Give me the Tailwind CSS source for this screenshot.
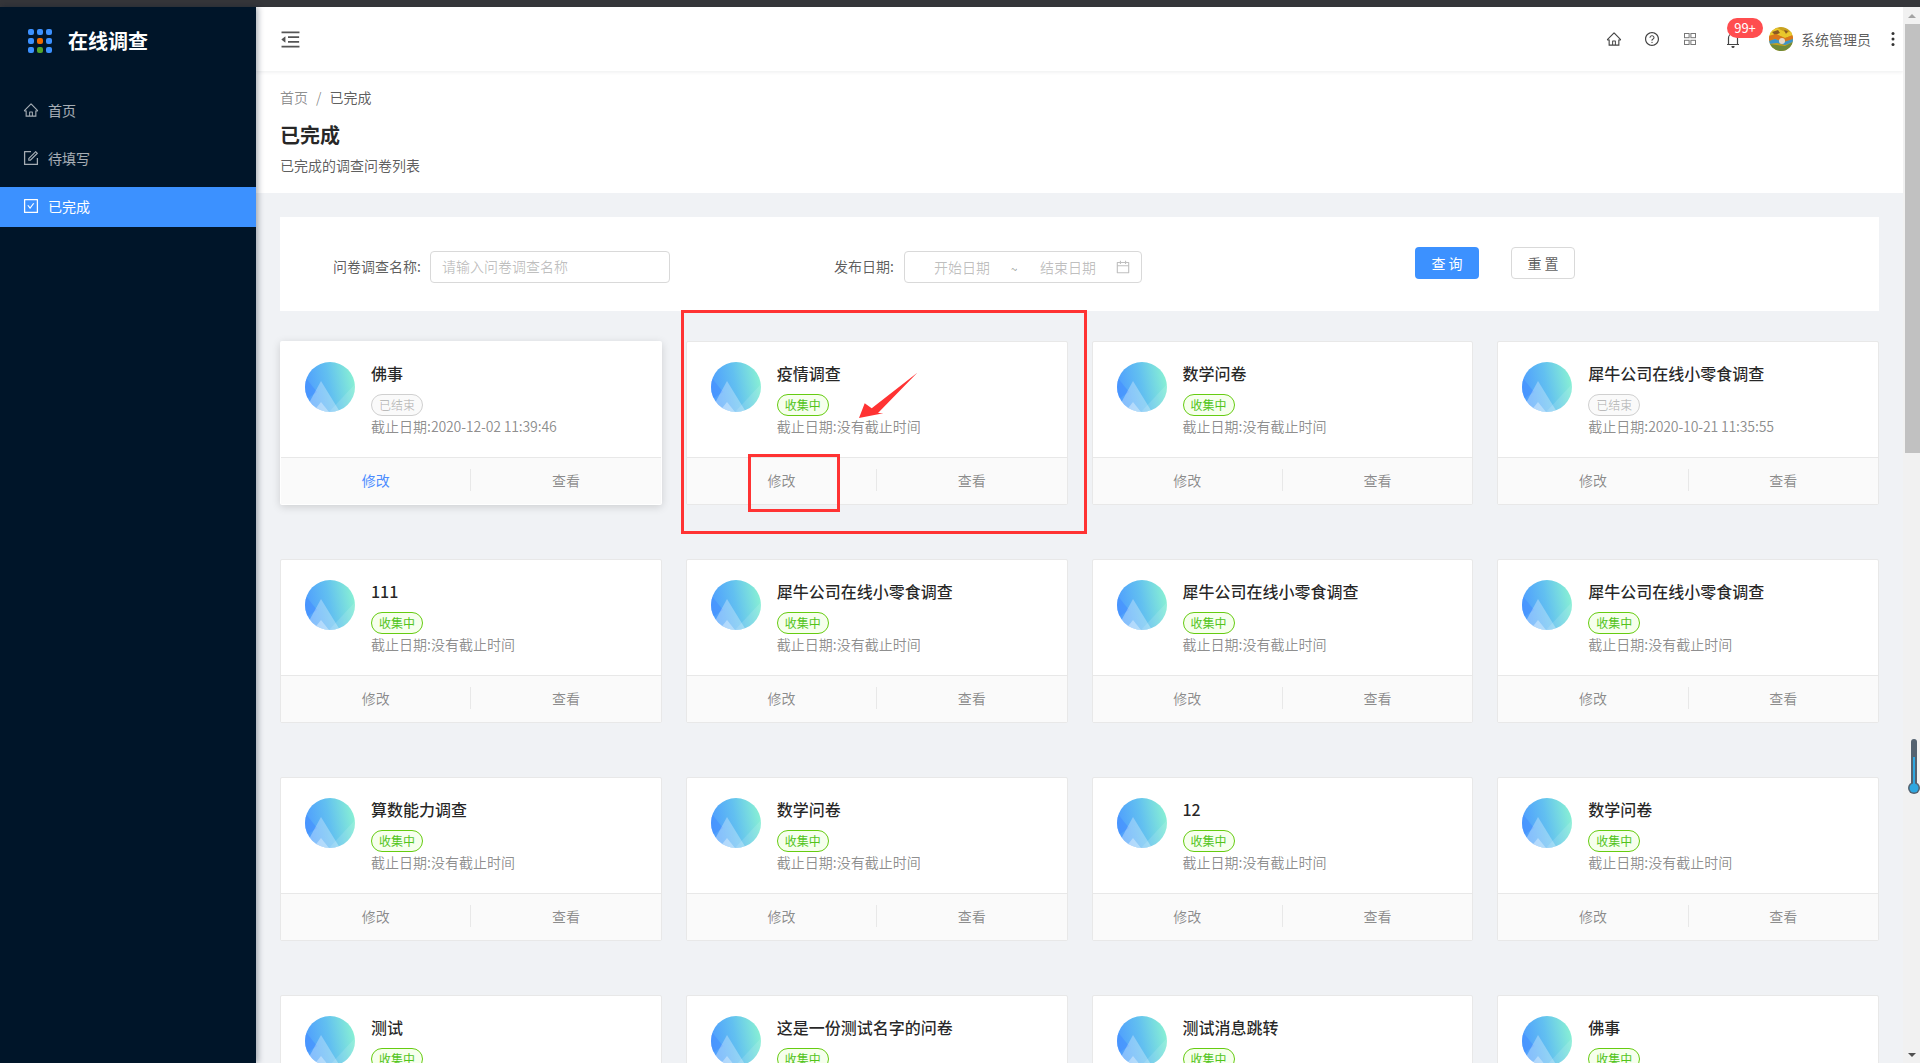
<!DOCTYPE html>
<html>

<head>
    <meta charset="utf-8">
    <script src="https://cdn.jsdelivr.net/npm/@tailwindcss/browser@4"></script>
    <title>已完成</title>
</head>

<body class="h-screen overflow-hidden bg-[#f0f2f5] font-['Noto_Sans_CJK_SC',sans-serif] text-sm">
    <div class="h-[7px] bg-[#35363a]"></div>
    <div class="flex h-[1056px]">
        <!-- sidebar -->
        <aside class="w-[256px] shrink-0 bg-[#001529] z-20 shadow-[2px_0_6px_rgba(0,21,41,0.35)]">
            <div class="flex items-center h-[68px] pl-[28px] gap-[16px]">
                <div class="grid grid-cols-3 gap-[3px]">
                    <i class="w-[6px] h-[6px] rounded-[2px] bg-[#3c91ff]"></i>
                    <i class="w-[6px] h-[6px] rounded-[2px] bg-[#3c91ff]"></i>
                    <i class="w-[6px] h-[6px] rounded-[2px] bg-[#3c91ff]"></i>
                    <i class="w-[6px] h-[6px] rounded-[2px] bg-[#3c91ff]"></i>
                    <i class="w-[6px] h-[6px] rounded-[2px] bg-[#f06a00]"></i>
                    <i class="w-[6px] h-[6px] rounded-[2px] bg-[#3c91ff]"></i>
                    <i class="w-[6px] h-[6px] rounded-[2px] bg-[#3c91ff]"></i>
                    <i class="w-[6px] h-[6px] rounded-[2px] bg-[#52a52a]"></i>
                    <i class="w-[6px] h-[6px] rounded-[2px] bg-[#3c91ff]"></i>
                </div>
                <span class="text-white text-[20px] font-bold">在线调查</span>
            </div>
            <nav class="pt-[16px] flex flex-col gap-[8px] text-white/65">
                <a class="flex items-center h-[40px] pb-[2px] pl-[23px] gap-[9px]">
                    <svg class="w-[16px] h-[16px]" viewBox="0 0 1024 1024" fill="currentColor"><path d="M946.5 505L560.1 118.8l-25.9-25.9a31.5 31.5 0 0 0-44.4 0L77.5 505a63.9 63.9 0 0 0-18.8 46c.4 35.2 29.7 63.3 64.9 63.3h42.5V940h691.8V614.3h43.4c17.1 0 33.2-6.7 45.3-18.8a63.6 63.6 0 0 0 18.7-45.3c0-17-6.7-33.1-18.8-45.2zM568 868H456V664h112v204zm217.9-325.7V868H632V640c0-22.1-17.9-40-40-40H432c-22.1 0-40 17.9-40 40v228H238.1V542.3h-96l370-369.7 23.1 23.1L882 542.3h-96.1z"/></svg>
                    首页
                </a>
                <a class="flex items-center h-[40px] pb-[2px] pl-[22px] gap-[8px]">
                    <svg class="w-[18px] h-[18px]" viewBox="0 0 1024 1024" fill="currentColor"><path d="M904 512h-56c-4.4 0-8 3.6-8 8v320H184V184h320c4.4 0 8-3.6 8-8v-56c0-4.4-3.6-8-8-8H144c-17.7 0-32 14.3-32 32v736c0 17.7 14.3 32 32 32h736c17.7 0 32-14.3 32-32V520c0-4.4-3.6-8-8-8z"/><path d="M355.9 534.9L354 653.8c-.1 8.9 7.1 16.2 16 16.2h.4l118-2.9c2-.1 4-.9 5.4-2.3l415.9-415c3.1-3.1 3.1-8.2 0-11.3L785.4 114.3c-1.6-1.6-3.6-2.3-5.7-2.3s-4.1.8-5.7 2.3l-415.8 415a8.3 8.3 0 0 0-2.3 5.6zm63.5 23.6L779.7 199l45.2 45.1-360.5 359.7-45.7 1.1.7-46.4z"/></svg>
                    待填写
                </a>
                <a class="flex items-center h-[40px] pb-[2px] pl-[22px] gap-[8px] bg-[#3c91ff] text-white">
                    <svg class="w-[18px] h-[18px]" viewBox="0 0 1024 1024" fill="currentColor"><path d="M433.1 657.7a31.8 31.8 0 0 0 51.7 0l210.6-292c3.8-5.3 0-12.7-6.5-12.7H642c-10.2 0-19.9 4.9-25.9 13.3L459 584.3l-71.2-98.8c-6-8.3-15.6-13.3-25.9-13.3H315c-6.5 0-10.3 7.4-6.5 12.7l124.6 172.8z"/><path d="M880 112H144c-17.7 0-32 14.3-32 32v736c0 17.7 14.3 32 32 32h736c17.7 0 32-14.3 32-32V144c0-17.7-14.3-32-32-32zm-40 728H184V184h656v656z"/></svg>
                    已完成
                </a>
            </nav>
        </aside>

        <div class="flex-1 min-w-0 flex flex-col">
            <!-- header -->
            <header class="h-[64px] shrink-0 bg-white flex items-center z-10 shadow-[0_1px_4px_rgba(0,21,41,0.08)] pl-[23px] pr-[8px] text-black/65">
                <svg class="w-[23px] h-[23px] text-[#555]" viewBox="0 0 1024 1024" fill="currentColor"><path d="M408 442h480c4.4 0 8-3.6 8-8v-56c0-4.4-3.6-8-8-8H408c-4.4 0-8 3.6-8 8v56c0 4.4 3.6 8 8 8zm-8 204c0 4.4 3.6 8 8 8h480c4.4 0 8-3.6 8-8v-56c0-4.4-3.6-8-8-8H408c-4.4 0-8 3.6-8 8v56zm504-486H120c-4.4 0-8 3.6-8 8v56c0 4.4 3.6 8 8 8h784c4.4 0 8-3.6 8-8v-56c0-4.4-3.6-8-8-8zm0 632H120c-4.4 0-8 3.6-8 8v56c0 4.4 3.6 8 8 8h784c4.4 0 8-3.6 8-8v-56c0-4.4-3.6-8-8-8zM115.4 518.9L271.7 642c5.8 4.6 14.4.5 14.4-6.9V388.9c0-7.4-8.5-11.5-14.4-6.9L115.4 505.1a8.74 8.74 0 0 0 0 13.8z"/></svg>
                <div class="ml-auto flex items-center">
                    <svg class="w-[16px] h-[16px] text-[#444]" viewBox="0 0 1024 1024" fill="currentColor"><path d="M946.5 505L560.1 118.8l-25.9-25.9a31.5 31.5 0 0 0-44.4 0L77.5 505a63.9 63.9 0 0 0-18.8 46c.4 35.2 29.7 63.3 64.9 63.3h42.5V940h691.8V614.3h43.4c17.1 0 33.2-6.7 45.3-18.8a63.6 63.6 0 0 0 18.7-45.3c0-17-6.7-33.1-18.8-45.2zM568 868H456V664h112v204zm217.9-325.7V868H632V640c0-22.1-17.9-40-40-40H432c-22.1 0-40 17.9-40 40v228H238.1V542.3h-96l370-369.7 23.1 23.1L882 542.3h-96.1z"/></svg>
                    <svg class="ml-[22px] w-[16px] h-[16px] text-[#444]" viewBox="0 0 1024 1024" fill="currentColor"><path d="M512 64C264.6 64 64 264.6 64 512s200.6 448 448 448 448-200.6 448-448S759.4 64 512 64zm0 820c-205.4 0-372-166.6-372-372s166.6-372 372-372 372 166.6 372 372-166.6 372-372 372z"/><path d="M623.6 316.7C593.6 290.4 554 276 512 276s-81.6 14.5-111.6 40.7C369.2 344 352 380.7 352 420v7.6c0 4.4 3.6 8 8 8h48c4.4 0 8-3.6 8-8V420c0-44.1 43.1-80 96-80s96 35.9 96 80c0 31.1-22 59.6-56.1 72.7-21.2 8.1-39.2 22.3-52.1 40.9-13.1 19-19.9 41.8-19.9 64.9V620c0 4.4 3.6 8 8 8h48c4.4 0 8-3.6 8-8v-22.7a48.3 48.3 0 0 1 30.9-44.8c59-22.7 97.1-74.7 97.1-132.5.1-39.3-17.1-76-48.3-103.3z"/><path d="M472 732a40 40 0 1 0 80 0 40 40 0 1 0-80 0z"/></svg>
                    <svg class="ml-[24px] w-[12px] h-[12px] text-[#777]" viewBox="0 0 12 12" fill="none" stroke="currentColor"><rect x="0.5" y="0.5" width="4.6" height="4.2"/><rect x="6.9" y="0.5" width="4.6" height="4.2"/><rect x="0.5" y="7.3" width="4.6" height="4.2"/><rect x="6.9" y="7.3" width="4.6" height="4.2"/></svg>
                    <div class="relative ml-[30px] mr-[29px] mt-[2px]">
                        <svg class="block w-[14px] h-[16px] text-[#444]" viewBox="0 0 14 16" fill="none" stroke="currentColor" stroke-width="1.2"><path d="M2.5 12.5V6a4.5 4.5 0 0 1 9 0v6.5M1 12.5h12"/><path d="M5.5 14h3v.5a1.5 1.5 0 0 1-3 0z" fill="currentColor" stroke="none"/></svg>
                        <span class="absolute left-[1px] top-[-14px] w-[36px] h-[20px] rounded-full bg-[#ff4d4f] text-white text-[13px] leading-[20px] text-center">99+</span>
                    </div>
                    <svg class="w-[24px] h-[24px] rounded-full" viewBox="0 0 24 24">
                        <rect width="24" height="24" fill="#c9a21f"/>
                        <path d="M0 4 8 1l10 5 6-3v5l-8 3L7 7 0 9z" fill="#e9c72c"/>
                        <path d="M3 5l6-2 2 3-5 2zM15 3l4 1-2 3z" fill="#8a5a24"/>
                        <path d="M0 9l7-2 9 4 8-3v4l-9 3-9-3-6 2z" fill="#d9771c"/>
                        <path d="M0 14l6-2 9 3 9-3v3l-8 3-8-2-8 1z" fill="#3b93c9"/>
                        <path d="M0 17l8 1 8 1 8-4v9H0z" fill="#6f8a3a"/>
                        <circle cx="13" cy="14" r="3" fill="#e8d9c8"/>
                    </svg>
                    <span class="ml-[8px] text-black/65">系统管理员</span>
                    <svg class="ml-[20px] w-[4px] h-[16px] text-[#333]" viewBox="0 0 4 16" fill="currentColor"><circle cx="2" cy="2.500" r="1.500"/><circle cx="2" cy="8" r="1.500"/><circle cx="2" cy="13.500" r="1.500"/></svg>
                </div>
            </header>

            <!-- page title -->
            <section class="h-[122px] shrink-0 bg-white px-[24px] pt-[15px]">
                <div class="h-[22px] leading-[22px] text-black/45">首页<span class="mx-[8px]">/</span><span class="text-black/65">已完成</span></div>
                <h1 class="mt-[11px] h-[32px] leading-[32px] text-[20px] font-bold text-black/85">已完成</h1>
                <p class="mt-[3px] h-[22px] leading-[22px] text-black/65">已完成的调查问卷列表</p>
            </section>

            <!-- content -->
            <main class="px-[24px] pt-[24px]">
                <form class="h-[94px] bg-white flex pl-[53px] pt-[34px] text-black/65">
                    <label class="h-[32px] leading-[30px] w-[97px] shrink-0 whitespace-nowrap">问卷调查名称:</label>
                    <div class="w-[240px] h-[32px] shrink-0 border border-[#d9d9d9] rounded-[4px] pl-[11px] leading-[28px] text-black/25">请输入问卷调查名称</div>
                    <label class="ml-[164px] h-[32px] leading-[30px] w-[70px] shrink-0 whitespace-nowrap">发布日期:</label>
                    <div class="w-[238px] h-[32px] shrink-0 border border-[#d9d9d9] rounded-[4px] flex items-center text-black/25 leading-[28px]">
                        <span class="ml-[12px] w-[90px] text-center">开始日期</span>
                        <span class="w-[14px] pt-[4px] text-center text-[12px] text-black/45">~</span>
                        <span class="w-[94px] text-center">结束日期</span>
                        <svg class="w-[16px] h-[16px]" viewBox="0 0 1024 1024" fill="currentColor"><path d="M880 184H712v-64c0-4.4-3.6-8-8-8h-56c-4.4 0-8 3.6-8 8v64H384v-64c0-4.4-3.6-8-8-8h-56c-4.4 0-8 3.6-8 8v64H144c-17.7 0-32 14.3-32 32v664c0 17.7 14.3 32 32 32h736c17.7 0 32-14.3 32-32V216c0-17.7-14.3-32-32-32zm-40 656H184V460h656v380zM184 392V256h128v48c0 4.4 3.6 8 8 8h56c4.4 0 8-3.6 8-8v-48h256v48c0 4.4 3.6 8 8 8h56c4.4 0 8-3.6 8-8v-48h128v136H184z"/></svg>
                    </div>
                    <button type="button" class="ml-[273px] -mt-[4px] w-[64px] h-[32px] pb-[1px] rounded-[4px] bg-[#3c91ff] text-white">查 询</button>
                    <button type="button" class="ml-[32px] -mt-[4px] w-[64px] h-[32px] pb-[1px] rounded-[4px] border border-[#d9d9d9] bg-white text-black/65">重 置</button>
                </form>
                <div id="cards" class="mt-[30px] grid grid-cols-4 gap-x-[24px] gap-y-[54px]"></div>
            </main>
        </div>

        <!-- browser scrollbar -->
        <div class="w-[17px] shrink-0 bg-[#f1f1f1] flex flex-col items-center z-10">
            <div class="h-[17px] flex items-center justify-center">
                <i class="border-x-[4px] border-x-transparent border-b-[4px] border-b-[#a3a3a3]"></i>
            </div>
            <div class="w-[15px] h-[429px] ml-[2px] bg-[#c1c1c1]"></div>
            <div class="mt-auto h-[17px] flex items-center justify-center">
                <i class="border-x-[4px] border-x-transparent border-t-[4px] border-t-[#505050]"></i>
            </div>
        </div>
    </div>

    <!-- annotations drawn on top of the screenshot -->
    <div class="absolute left-[681px] top-[310px] w-[406px] h-[224px] border-[3px] border-[#f33] z-30"></div>
    <div class="absolute left-[748px] top-[454px] w-[92px] h-[58px] border-[3px] border-[#f33] z-30"></div>
    <svg class="absolute left-[850px] top-[365px] w-[75px] h-[60px] z-30" viewBox="850 365 75 60">
        <polygon points="859,418 864.7,403.3 871.7,408.3 917.3,372.7 878,413 883.3,413.3" fill="#f33"/>
    </svg>
    <svg class="absolute left-[1907px] top-[738px] w-[13px] h-[57px] z-30" viewBox="0 0 13 57">
        <rect x="4" y="1" width="6" height="50" rx="3" fill="#546270"/>
        <circle cx="7" cy="50" r="6" fill="#546270"/>
        <rect x="6" y="19" width="2" height="31" fill="#2ea7e0"/>
        <circle cx="7" cy="50" r="4.500" fill="#2ea7e0"/>
    </svg>

    <script>
        const NO_END = "没有截止时间";
        const surveys = [
            { title: "佛事", done: true, end: "2020-12-02 11:39:46", active: true },
            { title: "疫情调查", end: NO_END },
            { title: "数学问卷", end: NO_END },
            { title: "犀牛公司在线小零食调查", done: true, end: "2020-10-21 11:35:55" },
            { title: "111", end: NO_END },
            { title: "犀牛公司在线小零食调查", end: NO_END },
            { title: "犀牛公司在线小零食调查", end: NO_END },
            { title: "犀牛公司在线小零食调查", end: NO_END },
            { title: "算数能力调查", end: NO_END },
            { title: "数学问卷", end: NO_END },
            { title: "12", end: NO_END },
            { title: "数学问卷", end: NO_END },
            { title: "测试", end: NO_END },
            { title: "这是一份测试名字的问卷", end: NO_END },
            { title: "测试消息跳转", end: NO_END },
            { title: "佛事", end: NO_END },
        ];

        const cover = (i) => `
            <svg class="w-[50px] h-[50px] rounded-full shrink-0" viewBox="0 0 50 50">
                <defs>
                    <linearGradient id="sky${i}" x1="0" y1="0.6" x2="1" y2="0.4">
                        <stop offset="0" stop-color="#4d9bff"/>
                        <stop offset="0.5" stop-color="#62c0f0"/>
                        <stop offset="1" stop-color="#88f0d4"/>
                    </linearGradient>
                </defs>
                <rect width="50" height="50" fill="url(#sky${i})"/>
                <path d="M0 15 12 30 0 38z" fill="#4590ff" opacity="0.6"/>
                <path d="M16 19 35 50H-1z" fill="#fff" opacity="0.3"/>
                <path d="M16 40 24 50H8z" fill="#fff" opacity="0.35"/>
                <path d="M50 22V50H24z" fill="#fff" opacity="0.12"/>
            </svg>`;

        const cardHtml = (s, i) => `
            <div class="h-[164px] bg-white flex flex-col rounded-[2px] border ${s.active ? "border-transparent shadow-[0_2px_8px_rgba(0,0,0,0.15)]" : "border-[#e8e8e8]"}">
                <div class="flex-1 flex gap-[16px] pl-[24px] pt-[20px]">
                    ${cover(i)}
                    <div class="min-w-0">
                        <h3 class="h-[22px] leading-[22px] text-[16px] font-medium text-black/85">${s.title}</h3>
                        <span class="block mt-[10px] w-[52px] h-[22px] rounded-full border text-center text-[12px] leading-[20px] ${s.done ? "border-[#d0d0d0] bg-[#fafafa] text-black/25" : "border-[#66cc11] bg-[#f6ffed] text-[#52c41a]"}">${s.done ? "已结束" : "收集中"}</span>
                        <p class="-mt-[1px] h-[22px] leading-[22px] text-black/45">截止日期:<span class="${s.done ? "tracking-[-0.2px]" : ""}">${s.end}</span></p>
                    </div>
                </div>
                <div class="h-[47px] pb-[2px] shrink-0 flex items-center bg-[#fafafa] border-t border-[#e8e8e8] text-black/45">
                    <a class="flex-1 text-center ${s.active ? "text-[#4d8dff]" : ""}">修改</a>
                    <i class="w-px h-[22px] bg-[#e8e8e8]"></i>
                    <a class="flex-1 text-center">查看</a>
                </div>
            </div>`;

        document.getElementById("cards").innerHTML = surveys.map(cardHtml).join("");
    </script>
</body>

</html>
